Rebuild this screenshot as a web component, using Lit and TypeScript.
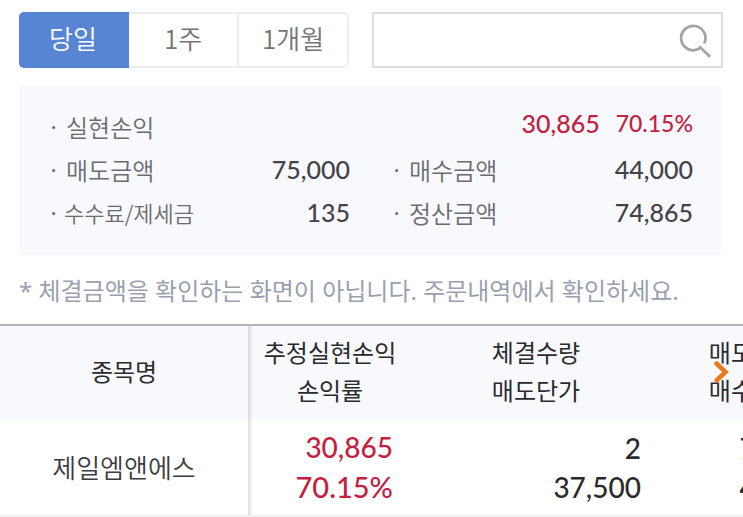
import { LitElement, html, css } from "lit";
import { customElement, state } from "lit/decorators.js";
import { classMap } from "lit/directives/class-map.js";

interface Holding {
  name: string;
  profit: string;
  rate: string;
  quantity: string;
  sellPrice: string;
  sellAmount: string;
  buyAmount: string;
}

@customElement("app-root")
export class AppRoot extends LitElement {
  static styles = css`
    :host {
      display: block;
      overflow: hidden;
      background: #fff;
      color: #2b2b2e;
      font-family: "Noto Sans CJK KR", sans-serif;
      font-size: 24px;
    }
    .toolbar {
      display: flex;
      gap: 23px;
      padding: 12px 20px 19px 19px;
    }
    .tabs {
      flex: 330 1 0;
      display: grid;
      grid-template-columns: repeat(3, 1fr);
      box-sizing: border-box;
      height: 56px;
    }
    .tab {
      padding: 0 0 4px;
      border: 2px solid #ededef;
      border-left-width: 0;
      background: #fff;
      color: #747477;
      font: 350 26px/36px "Noto Sans CJK KR", sans-serif;
    }
    .tab:first-child {
      border-radius: 5px 0 0 5px;
    }
    .tab:last-child {
      border-radius: 0 5px 5px 0;
    }
    .tab.active {
      border-color: #5885d3;
      background: #5885d3;
      color: #fff;
    }
    .search {
      flex: 337 1 0;
      display: flex;
      align-items: center;
      box-sizing: border-box;
      height: 56px;
      border: 2px solid #dfdfe0;
      padding-right: 10px;
    }
    .field {
      flex: 1;
      min-width: 0;
      height: 100%;
      box-sizing: border-box;
      border: 0;
      padding: 0 14px;
      outline: 0;
      background: none;
      font: inherit;
    }
    .find {
      display: flex;
      padding: 0;
      border: 0;
      background: none;
    }
    .summary {
      display: grid;
      grid-template-columns: 1fr 1fr;
      grid-auto-rows: 43px;
      column-gap: 44px;
      margin: 0 22px 0 19px;
      padding: 18px 28px 21px 32px;
      background: #f8f9fd;
    }
    .item {
      display: flex;
      justify-content: space-between;
      line-height: 43px;
      white-space: nowrap;
    }
    .item.wide {
      grid-column: 1 / -1;
    }
    .label {
      display: flex;
      color: #6c6c70;
      font-weight: 350;
    }
    .label.small {
      font-size: 22px;
    }
    .label::before {
      content: "·";
      width: 15px;
      font-family: Lato, sans-serif;
      font-weight: 400;
      font-size: 20px;
      line-height: 41px;
    }
    .label.small::before {
      width: 13px;
    }
    .value {
      color: #434347;
      font-family: Lato, sans-serif;
      font-weight: 500;
      font-size: 25px;
    }
    .gain {
      display: flex;
      gap: 16px;
      line-height: 36px;
      color: #c5203f;
    }
    .percent {
      font-size: 23px;
    }
    .note {
      margin: 0;
      padding: 18px 19px 15px;
      font-family: "Noto Sans", "Noto Sans CJK KR", sans-serif;
      line-height: 36px;
      color: #9a9fb0;
      white-space: nowrap;
    }
    .board {
      position: relative;
      border-top: 2px solid #b5b5b8;
    }
    .scroller {
      overflow-x: auto;
      scrollbar-width: none;
    }
    .grid {
      width: 846px;
      table-layout: fixed;
      border-collapse: separate;
      border-spacing: 0;
    }
    .name-col {
      width: 248px;
    }
    .profit-col {
      width: 164px;
    }
    .total-col {
      width: 186px;
    }
    .head {
      height: 94px;
      box-sizing: border-box;
      padding: 0 0 4px;
      background: #f8f9fd;
      font-weight: 400;
      line-height: 38px;
    }
    .cell {
      height: 97px;
      box-sizing: border-box;
      padding: 0 19px 0 0;
      border-bottom: 2px solid #f0f0f1;
      background: #fff;
      font-family: Lato, sans-serif;
      font-weight: 500;
      font-size: 28px;
      line-height: 39px;
      text-align: right;
    }
    .pinned {
      position: sticky;
      left: 0;
      z-index: 1;
    }
    .pinned::after {
      content: "";
      position: absolute;
      top: 0;
      bottom: 0;
      left: 100%;
      width: 5px;
      background: linear-gradient(to right, rgba(0, 0, 0, 0.13), transparent);
    }
    .stock {
      padding: 0 0 2px;
      color: #3c3c40;
      font-family: "Noto Sans CJK KR", sans-serif;
      font-weight: 350;
      font-size: 26px;
      text-align: center;
    }
    .up {
      color: #c5203f;
    }
    .rate {
      font-size: 29px;
    }
    .next {
      position: absolute;
      top: 34px;
      right: 13px;
      z-index: 2;
      display: flex;
      padding: 0;
      border: 0;
      background: none;
    }
  `;

  @state() private period = "당일";

  private periods = ["당일", "1주", "1개월"];

  private holdings: Holding[] = [
    {
      name: "제일엠앤에스",
      profit: "30,865",
      rate: "70.15%",
      quantity: "2",
      sellPrice: "37,500",
      sellAmount: "75,000",
      buyAmount: "44,000",
    },
  ];

  private scrollNext() {
    this.renderRoot.querySelector(".scroller")?.scrollBy({ left: 186, behavior: "smooth" });
  }

  render() {
    return html`
      <div class="toolbar">
        <div class="tabs">
          ${this.periods.map(
            (p) => html`<button
              class=${classMap({ tab: true, active: p === this.period })}
              aria-pressed=${p === this.period}
              @click=${() => (this.period = p)}
            >${p}</button>`
          )}
        </div>
        <div class="search">
          <input class="field" type="text" aria-label="종목 검색" />
          <button class="find" aria-label="검색">
            <svg width="34" height="36" viewBox="0 0 34 36" fill="none" stroke="#a3a3a5" stroke-width="2.7">
              <path d="M27.2 21.5A12.2 12.2 0 1 0 21.4 27.1L23.2 25.4L33 34.8" />
            </svg>
          </button>
        </div>
      </div>

      <dl class="summary">
        <div class="item wide">
          <dt class="label">실현손익</dt>
          <dd class="value gain"><span>30,865</span><span class="percent">70.15%</span></dd>
        </div>
        <div class="item"><dt class="label">매도금액</dt><dd class="value">75,000</dd></div>
        <div class="item"><dt class="label">매수금액</dt><dd class="value">44,000</dd></div>
        <div class="item"><dt class="label small">수수료/제세금</dt><dd class="value">135</dd></div>
        <div class="item"><dt class="label">정산금액</dt><dd class="value">74,865</dd></div>
      </dl>

      <p class="note">* 체결금액을 확인하는 화면이 아닙니다. 주문내역에서 확인하세요.</p>

      <div class="board">
        <div class="scroller">
          <table class="grid">
            <colgroup>
              <col class="name-col" />
              <col class="profit-col" />
              <col class="name-col" />
              <col class="total-col" />
            </colgroup>
            <thead>
              <tr>
                <th class="head pinned" scope="col">종목명</th>
                <th class="head" scope="col">추정실현손익<br />손익률</th>
                <th class="head" scope="col">체결수량<br />매도단가</th>
                <th class="head" scope="col">매도금액<br />매수금액</th>
              </tr>
            </thead>
            <tbody>
              ${this.holdings.map(
                (h) => html`<tr>
                  <td class="cell stock pinned">${h.name}</td>
                  <td class="cell up">${h.profit}<br /><span class="rate">${h.rate}</span></td>
                  <td class="cell">${h.quantity}<br />${h.sellPrice}</td>
                  <td class="cell">${h.sellAmount}<br />${h.buyAmount}</td>
                </tr>`
              )}
            </tbody>
          </table>
        </div>
        <button class="next" aria-label="다음 항목" @click=${this.scrollNext}>
          <svg width="18" height="24" viewBox="0 0 18 24" fill="none" stroke="#ec7a1c" stroke-width="4.5">
            <path d="M4.5 3.5L13.5 12L4.5 20.5" stroke-linecap="round" />
          </svg>
        </button>
      </div>
    `;
  }
}
